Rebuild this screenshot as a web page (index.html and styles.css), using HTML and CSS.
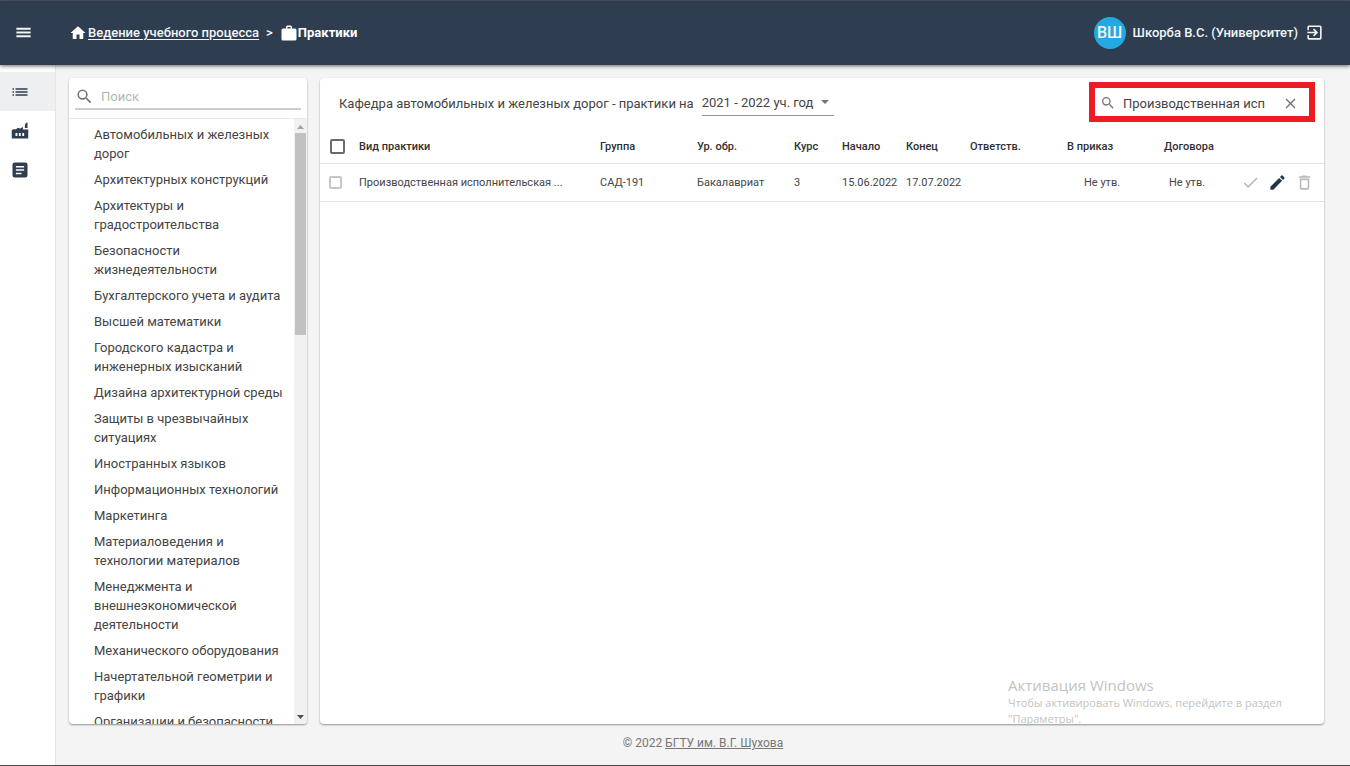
FILE: index.html
```html
<!DOCTYPE html>
<html lang="ru">
<head>
<meta charset="utf-8">
<meta name="viewport" content="width=device-width, initial-scale=1">
<title>Практики</title>
<link rel="stylesheet" href="styles.css">
</head>
<body>
<div class="app">
  <header class="topbar">
    <button class="icon-btn menu-btn" type="button" aria-label="Меню">
      <svg width="19" height="19" viewBox="0 0 24 24"><path d="M3 18h18v-2.500H3zm0-4.750h18v-2.500H3zM3 6v2.500h18V6z"/></svg>
    </button>
    <nav class="crumbs" aria-label="Навигация">
      <svg width="18" height="18" viewBox="0 0 24 24"><path d="M10 20v-6h4v6h5v-8h3L12 3 2 12h3v8z"/></svg>
      <a href="#">Ведение учебного процесса</a>
      <span class="sep">&gt;</span>
      <svg width="18" height="18" viewBox="0 0 24 24"><path d="M10 2h4a2 2 0 0 1 2 2v2h4a2 2 0 0 1 2 2v12a2 2 0 0 1-2 2H4a2 2 0 0 1-2-2V8a2 2 0 0 1 2-2h4V4a2 2 0 0 1 2-2m4 4V4h-4v2z"/></svg>
      <span class="current">Практики</span>
    </nav>
    <div class="user">
      <span class="avatar">ВШ</span>
      <span class="user-name">Шкорба В.С. (Университет)</span>
      <button class="icon-btn" type="button" aria-label="Выйти">
        <svg width="19" height="19" viewBox="0 0 24 24"><path d="M10.09 15.59L11.5 17l5-5-5-5-1.41 1.41L12.67 11H3v2h9.67zM19 3H5a2 2 0 0 0-2 2v4h2V5h14v14H5v-4H3v4a2 2 0 0 0 2 2h14a2 2 0 0 0 2-2V5a2 2 0 0 0-2-2z"/></svg>
      </button>
    </div>
  </header>

  <div class="body">
    <nav class="rail" aria-label="Разделы">
      <a class="rail-item active" href="#" aria-label="Список">
        <svg width="18" height="18" viewBox="0 0 24 24"><path d="M2 13h2v-2H2v2zm0 4h2v-2H2v2zm0-8h2V7H2v2zm4 4h16v-2H6v2zm0 4h16v-2H6v2zM6 7v2h16V7z"/></svg>
      </a>
      <a class="rail-item" href="#" aria-label="Предприятия">
        <svg width="18" height="18" viewBox="0 0 24 24"><path fill-rule="evenodd" d="M1 11l2-1.500h2l1 .5 3-2h2l1 1 3-2h1v3h7v12H1zM6 14.500v4h2.500v-4zm4.500 0v4H13v-4zm4.500 0v4h2.500v-4zM18.500 8V4L20 1h2v7z"/></svg>
      </a>
      <a class="rail-item" href="#" aria-label="Документы">
        <svg width="18" height="18" viewBox="0 0 24 24"><path d="M19 2H5a3 3 0 0 0-3 3v14a3 3 0 0 0 3 3h14a3 3 0 0 0 3-3V5a3 3 0 0 0-3-3zM14 17.500H6.500v-2H14zm3.500-4.500h-11v-2h11zm0-4.500h-11v-2h11z"/></svg>
      </a>
    </nav>

    <div class="page">
      <main class="cards">
        <aside class="card departments">
          <div class="dep-search">
            <label class="dep-field">
              <svg width="19" height="19" viewBox="0 0 24 24"><path d="M15.500 14h-.79l-.28-.27A6.470 6.470 0 0 0 16 9.500 6.500 6.500 0 1 0 9.500 16c1.610 0 3.090-.59 4.230-1.570l.27.28v.79l5 4.990L20.490 19zm-6 0a4.500 4.500 0 1 1 0-9 4.500 4.500 0 0 1 0 9z"/></svg>
              <input type="text" placeholder="Поиск" aria-label="Поиск кафедры">
            </label>
          </div>
          <div class="dep-body">
            <ul class="dep-list">
              <li>Автомобильных и железных дорог</li>
              <li>Архитектурных конструкций</li>
              <li>Архитектуры и градостроительства</li>
              <li>Безопасности жизнедеятельности</li>
              <li>Бухгалтерского учета и аудита</li>
              <li>Высшей математики</li>
              <li>Городского кадастра и инженерных изысканий</li>
              <li>Дизайна архитектурной среды</li>
              <li>Защиты в чрезвычайных ситуациях</li>
              <li>Иностранных языков</li>
              <li>Информационных технологий</li>
              <li>Маркетинга</li>
              <li>Материаловедения и технологии материалов</li>
              <li>Менеджмента и внешнеэкономической деятельности</li>
              <li>Механического оборудования</li>
              <li>Начертательной геометрии и графики</li>
              <li>Организации и безопасности</li>
            </ul>
            <div class="scrollbar" aria-hidden="true">
              <svg class="up" width="7" height="4" viewBox="0 0 7 4"><path d="M0 4h7L3.500 0z"/></svg>
              <div class="thumb"></div>
              <svg class="down" width="7" height="4" viewBox="0 0 7 4"><path d="M0 0h7L3.500 4z"/></svg>
            </div>
          </div>
        </aside>

        <section class="card practices">
          <div class="toolbar">
            <label class="title" for="year">Кафедра автомобильных и железных дорог - практики на</label>
            <span class="year">
              <select id="year"><option>2021 - 2022 уч. год</option></select>
              <svg width="8" height="4" viewBox="0 0 8 4"><path d="M0 0h8L4 4z"/></svg>
            </span>
            <div class="filter">
              <svg width="16" height="16" viewBox="0 0 24 24"><path d="M15.500 14h-.79l-.28-.27A6.470 6.470 0 0 0 16 9.500 6.500 6.500 0 1 0 9.500 16c1.610 0 3.090-.59 4.230-1.570l.27.28v.79l5 4.990L20.490 19zm-6 0a4.500 4.500 0 1 1 0-9 4.500 4.500 0 0 1 0 9z"/></svg>
              <input type="text" value="Производственная исп" aria-label="Фильтр">
              <button class="icon-btn" type="button" aria-label="Очистить">
                <svg width="17" height="17" viewBox="0 0 24 24"><path d="M19 6.410L17.590 5 12 10.590 6.410 5 5 6.410 10.590 12 5 17.590 6.410 19 12 13.410 17.590 19 19 17.590 13.410 12z"/></svg>
              </button>
            </div>
          </div>
          <table class="grid">
            <colgroup>
              <col class="c-check"><col class="c-kind"><col class="c-mid"><col class="c-mid"><col class="c-course"><col class="c-date"><col class="c-date"><col class="c-mid"><col class="c-mid"><col class="c-contract"><col class="c-actions">
            </colgroup>
            <thead>
              <tr>
                <th><input class="check" type="checkbox" aria-label="Выбрать все"></th>
                <th>Вид практики</th><th>Группа</th><th>Ур. обр.</th><th>Курс</th><th>Начало</th><th>Конец</th><th>Ответств.</th><th>В приказ</th><th>Договора</th><th></th>
              </tr>
            </thead>
            <tbody>
              <tr>
                <td><input class="check small" type="checkbox" aria-label="Выбрать строку"></td>
                <td>Производственная исполнительская ...</td>
                <td>САД-191</td><td>Бакалавриат</td><td>3</td><td>15.06.2022</td><td>17.07.2022</td><td></td>
                <td class="order">Не утв.</td><td class="contract">Не утв.</td>
                <td>
                  <div class="actions">
                    <button class="icon-btn muted" type="button" aria-label="Утвердить"><svg width="19" height="19" viewBox="0 0 24 24"><path d="M9 16.170L4.830 12l-1.420 1.410L9 19 21 7l-1.410-1.410z"/></svg></button>
                    <button class="icon-btn edit" type="button" aria-label="Изменить"><svg width="19" height="19" viewBox="0 0 24 24"><path d="M3 17.250V21h3.750L17.810 9.940l-3.750-3.750zM20.710 7.040a1 1 0 0 0 0-1.410l-2.340-2.340a1 1 0 0 0-1.410 0l-1.830 1.830 3.750 3.750z"/></svg></button>
                    <button class="icon-btn muted" type="button" aria-label="Удалить"><svg width="19" height="19" viewBox="0 0 24 24"><path d="M6 19a2 2 0 0 0 2 2h8a2 2 0 0 0 2-2V7H6zM8 9h8v10H8zm7.500-5l-1-1h-5l-1 1H5v2h14V4z"/></svg></button>
                  </div>
                </td>
              </tr>
            </tbody>
          </table>
          <div class="activation">
            <p class="activation-title">Активация Windows</p>
            <p>Чтобы активировать Windows, перейдите в раздел "Параметры".</p>
          </div>
        </section>
      </main>
      <footer class="footer">© 2022 <a href="#">БГТУ им. В.Г. Шухова</a></footer>
    </div>
  </div>
</div>
</body>
</html>
```
FILE: styles.css
```css
* { box-sizing: border-box; }

body {
  margin: 0;
  font-family: Roboto, "Noto Sans", sans-serif;
  font-size: 13px;
  color: #444;
}

svg { display: block; flex: none; fill: currentColor; }

input, select, button { font: inherit; color: inherit; }

.app {
  display: flex;
  flex-direction: column;
  height: 100vh;
  border-top: 1px solid #53585f;
  border-bottom: 1px solid #4a4a4c;
  background: #f4f4f4;
}

.icon-btn {
  display: flex;
  padding: 0;
  border: 0;
  background: none;
  cursor: pointer;
}

/* Top bar */
.topbar {
  position: relative;
  z-index: 1;
  display: flex;
  align-items: center;
  flex: none;
  height: 64px;
  padding: 0 26px 1px 14px;
  background: #2e3e50;
  color: #f2f4f5;
  font-weight: 500;
  box-shadow: 0 1px 4px rgba(0, 0, 0, .6);
}

.crumbs { display: flex; align-items: center; margin-left: 36px; }
.crumbs a { margin-left: 1px; color: inherit; text-underline-offset: 2px; }
.crumbs svg { color: #fff; }
.sep { margin: 0 7px; }
.current { color: #fff; font-weight: 700; }

.user { display: flex; align-items: center; gap: 7px; margin-left: auto; }

.avatar {
  display: flex;
  align-items: center;
  justify-content: center;
  width: 32px;
  height: 32px;
  border-radius: 50%;
  background: #23a9e1;
  font-size: 16px;
}

/* Side rail */
.body { display: flex; flex: 1; min-height: 0; }

.rail {
  flex: none;
  width: 56px;
  padding-top: 7px;
  border-right: 1px solid #e6e6e6;
  background: #fff;
}

.rail-item {
  display: flex;
  align-items: center;
  height: 39px;
  padding-left: 11px;
  color: #2e3e50;
}

.rail-item.active { background: #eeeff0; }

/* Content */
.page { display: flex; flex: 1; flex-direction: column; min-width: 0; }

.cards {
  display: grid;
  grid-template-columns: 238px minmax(0, 1fr);
  gap: 13px;
  flex: 1;
  min-height: 0;
  padding: 13px 26px 0 13px;
}

.card {
  display: flex;
  flex-direction: column;
  min-height: 0;
  border-radius: 4px;
  background: #fff;
  box-shadow: 0 1px 2px rgba(0, 0, 0, .4);
}

.footer {
  flex: none;
  padding: 12px 0 14px;
  color: #777;
  font-size: 12px;
  line-height: 15px;
  text-align: center;
}

.footer a { color: inherit; }

/* Departments */
.dep-search { padding: 6px 6px 8px; border-bottom: 1px solid #e8e8e8; }

.dep-field {
  display: flex;
  align-items: center;
  gap: 7px;
  height: 26px;
  border-bottom: 2px solid #ccc;
  color: #757575;
}

.dep-field input {
  flex: 1;
  min-width: 0;
  padding: 0;
  border: 0;
  outline: 0;
  background: none;
}

.dep-field input::placeholder { color: #b5b5b5; opacity: 1; }

.dep-body { display: flex; flex: 1; min-height: 0; overflow: hidden; border-radius: 0 0 4px 4px; }

.dep-list {
  display: flex;
  flex: 1;
  flex-direction: column;
  gap: 7px;
  margin: 0;
  padding: 6px 8px 6px 25px;
  overflow-y: auto;
  scrollbar-width: none;
  list-style: none;
  line-height: 19px;
}

.scrollbar {
  display: flex;
  flex-direction: column;
  align-items: center;
  flex: none;
  width: 13px;
  padding: 6px 0 5px;
  background: #f1f1f1;
}

.up { color: #a3a3a3; }
.down { margin-top: auto; color: #505050; }
.thumb { width: 11px; height: 34%; margin-top: 4px; background: #c1c1c1; }

/* Practices */
.practices { position: relative; }

.toolbar { display: flex; align-items: center; padding: 4px 9px 5px 19px; }

.title { padding-top: 2px; }

.year {
  display: flex;
  align-items: center;
  gap: 7px;
  height: 28px;
  margin-left: 8px;
  padding-right: 5px;
  border-bottom: 1px solid #949494;
}

.year select { padding: 2px 0 0; border: 0; outline: 0; appearance: none; background: none; }
.year svg { color: #757575; }

.filter {
  display: flex;
  align-items: center;
  gap: 7px;
  width: 226px;
  height: 40px;
  margin-left: auto;
  padding: 2px 10px 0 5px;
  border: 6px solid #ed1c24;
  color: #757575;
}

.filter input {
  flex: 1;
  min-width: 0;
  padding: 0;
  border: 0;
  outline: 0;
  background: none;
  color: #444;
}

.grid {
  width: 100%;
  border-collapse: collapse;
  table-layout: fixed;
  font-size: 11px;
}

.grid th, .grid td {
  height: 38px;
  padding: 0;
  border-bottom: 1px solid #e3e3e3;
  text-align: left;
  white-space: nowrap;
}

.grid th { height: 36px; padding-top: 3px; font-weight: 500; color: #2f2f2f; }

.c-check { width: 39px; }
.c-mid { width: 97px; }
.c-course { width: 48px; }
.c-date { width: 64px; }
.c-contract { width: 77px; }
.c-actions { width: 83px; }

.grid .order { padding-left: 17px; }
.grid .contract { padding-left: 5px; }

.check {
  display: block;
  appearance: none;
  width: 15px;
  height: 15px;
  margin: 0 0 0 10px;
  border: 2px solid #6b6b6b;
  border-radius: 2px;
}

.check.small { width: 13px; height: 13px; margin-left: 9px; border-color: #c6c6c6; }

.actions { display: flex; gap: 8px; }
.muted { color: #b8b8b8; }
.edit { color: #24364b; }

/* Desktop watermark lying over the card */
.activation {
  position: absolute;
  right: 24px;
  bottom: -3px;
  width: 292px;
  color: #c3c3c3;
  font-family: "Open Sans", "Noto Sans", sans-serif;
  font-size: 11px;
  line-height: 16px;
  pointer-events: none;
}

.activation p { margin: 0; }
.activation .activation-title { font-size: 15px; line-height: 20px; }
```
